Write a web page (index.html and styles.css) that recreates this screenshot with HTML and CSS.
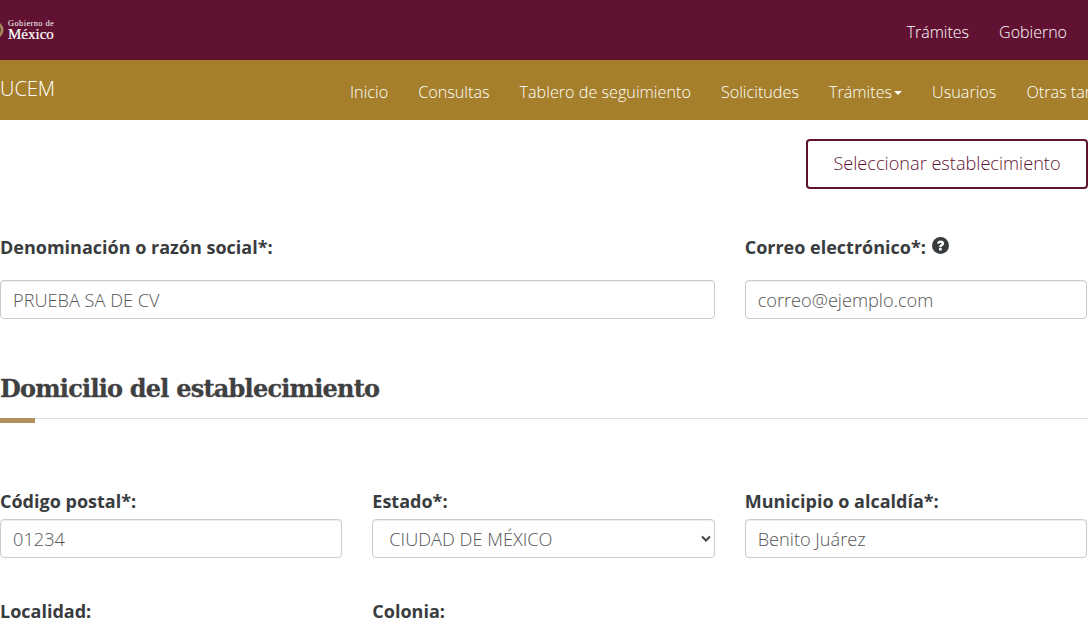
FILE: index.html
```html
<!DOCTYPE html>
<html lang="es">
<head>
<meta charset="utf-8">
<title>UCEM</title>
<link rel="stylesheet" href="styles.css">
</head>
<body>
<header class="topbar">
  <a class="brand" href="#">
    <svg class="emblem" width="5" height="18" viewBox="0 0 5 18" aria-hidden="true"><circle cx="-5" cy="9" r="8.500" fill="#a58a5c"/><circle cx="-5" cy="9" r="6" fill="#6d3a3a"/></svg>
    <span class="brand-text"><span class="brand-small">Gobierno de</span><span class="brand-big">México</span></span>
  </a>
  <nav class="topnav"><a href="#">Trámites</a><a href="#">Gobierno</a></nav>
</header>
<div class="subbar">
  <a class="app-name" href="#">UCEM</a>
  <nav class="subnav">
    <a href="#">Inicio</a><a href="#">Consultas</a><a href="#">Tablero de seguimiento</a><a href="#">Solicitudes</a><a href="#">Trámites<span class="caret"></span></a><a href="#">Usuarios</a><a href="#">Otras tareas</a>
  </nav>
</div>
<main class="content">
  <div class="actions"><button class="btn-outline" type="button">Seleccionar establecimiento</button></div>
  <div class="form-grid row-one">
    <div class="field span-2">
      <label class="label">Denominación o razón social*:</label>
      <input class="control" type="text" value="PRUEBA SA DE CV">
    </div>
    <div class="field">
      <label class="label">Correo electrónico*:
        <svg class="help" width="17" height="17" viewBox="0 0 17 17" aria-hidden="true"><circle cx="8.500" cy="8.500" r="8.500" fill="#393c3e"/><path d="M5 6.400C5.300 4.500 6.700 3.500 8.600 3.500c2 0 3.500 1.100 3.500 2.900 0 1.300-.8 2-1.600 2.500-.7.400-.9.700-.9 1.300H7.200c0-1.300.4-2 1.300-2.600.6-.4 1-.6 1-1.100 0-.5-.4-.8-1-.8-.6 0-1 .4-1.200 1.100z" fill="#fff"/><rect x="7" y="11" width="2.700" height="2.500" rx=".4" fill="#fff"/></svg>
      </label>
      <input class="control" type="text" value="correo@ejemplo.com">
    </div>
  </div>
  <h2 class="section-title">Domicilio del establecimiento</h2>
  <div class="rule"><span class="rule-accent"></span></div>
  <div class="form-grid row-two">
    <div class="field tight">
      <label class="label">Código postal*:</label>
      <input class="control" type="text" value="01234">
    </div>
    <div class="field tight">
      <label class="label">Estado*:</label>
      <div class="select-wrap">
        <select class="control select"><option>CIUDAD DE MÉXICO</option></select>
        <svg class="chevron" width="10" height="7" viewBox="0 0 10 7" aria-hidden="true"><path d="M1 1.500l4 4 4-4" fill="none" stroke="#444" stroke-width="2"/></svg>
      </div>
    </div>
    <div class="field tight">
      <label class="label">Municipio o alcaldía*:</label>
      <input class="control" type="text" value="Benito Juárez">
    </div>
  </div>
  <div class="form-grid row-three">
    <div class="field"><label class="label">Localidad:</label></div>
    <div class="field"><label class="label">Colonia:</label></div>
  </div>
</main>
</body>
</html>
```
FILE: styles.css
```css
* { box-sizing: border-box; }
html, body { margin: 0; padding: 0; height: 633px; overflow: hidden; background: #fff; }
body { font-family: "Open Sans", "Noto Sans", sans-serif; font-size: 16px; color: #393c3e; width: 1088px; }
a { color: inherit; text-decoration: none; }

.topbar { height: 60px; background: #611232; color: #fff; display: flex; align-items: center; justify-content: space-between; padding-right: 21px; }
.brand { display: flex; align-items: center; gap: 3px; }
.emblem { display: block; }
.brand-text { display: flex; flex-direction: column; font-family: "Liberation Serif", serif; line-height: 1; margin-top: -1px; }
.brand-small { font-size: 8.300px; letter-spacing: .45px; line-height: 8px; }
.brand-big { font-size: 15px; line-height: 12px; -webkit-text-stroke: .2px #fff; }
.topnav { display: flex; gap: 30px; font-size: 16px; font-weight: 300; margin-top: 3px; }

.subbar { height: 60px; background: #a57f2c; color: #fff; display: flex; align-items: center; overflow: hidden; }
.app-name { width: 350px; flex: none; font-size: 20px; font-weight: 300; line-height: 24px; margin-top: -2px; }
.subnav { display: flex; flex: none; gap: 30px; white-space: nowrap; font-size: 16.200px; font-weight: 300; margin-top: 3px; }
.caret { display: inline-block; margin-left: 2px; vertical-align: middle; border-top: 4px solid #fff; border-left: 4px solid transparent; border-right: 4px solid transparent; }

.actions { display: flex; justify-content: flex-end; padding-top: 19px; }
.btn-outline { width: 282px; height: 50px; background: #fff; border: 2px solid #611232; border-radius: 4px; color: #611232; font: 300 18.150px "Open Sans", "Noto Sans", sans-serif; padding: 0 0 2px; }

.form-grid { display: grid; grid-template-columns: repeat(3, 342.330px); column-gap: 30px; width: 1087px; }
.row-one { margin-top: 46px; }
.row-two { margin-top: 70px; }
.row-three { margin-top: 41px; }
.span-2 { grid-column: span 2; }
.field { display: flex; flex-direction: column; gap: 21px; }
.field.tight { gap: 6px; }
.label { font-weight: 700; font-size: 18px; line-height: 24px; display: block; white-space: nowrap; }
.help { vertical-align: 0; margin-left: 1px; }

.control { display: block; width: 100%; height: 39px; border: 1px solid #ccc; border-radius: 4px; background: #fff; padding: 0 12px; font: 300 18.200px "Open Sans", "Noto Sans", sans-serif; color: #555; box-shadow: inset 0 1px 1px rgba(0, 0, 0, .075); }
.select-wrap { position: relative; }
.select { appearance: none; padding-left: 16px; }
.chevron { position: absolute; right: 4px; top: 16px; }

.section-title { margin: 52px 0 0; font-family: "DejaVu Serif", serif; font-weight: 700; font-size: 24px; letter-spacing: -.78px; line-height: 36px; color: #3f4042; -webkit-text-stroke: .3px #3f4042; }
.rule { height: 1px; background: #ddd; margin-top: 11px; position: relative; }
.rule-accent { position: absolute; left: 0; top: 0; width: 35px; height: 5px; background: #b38e5d; }
```
